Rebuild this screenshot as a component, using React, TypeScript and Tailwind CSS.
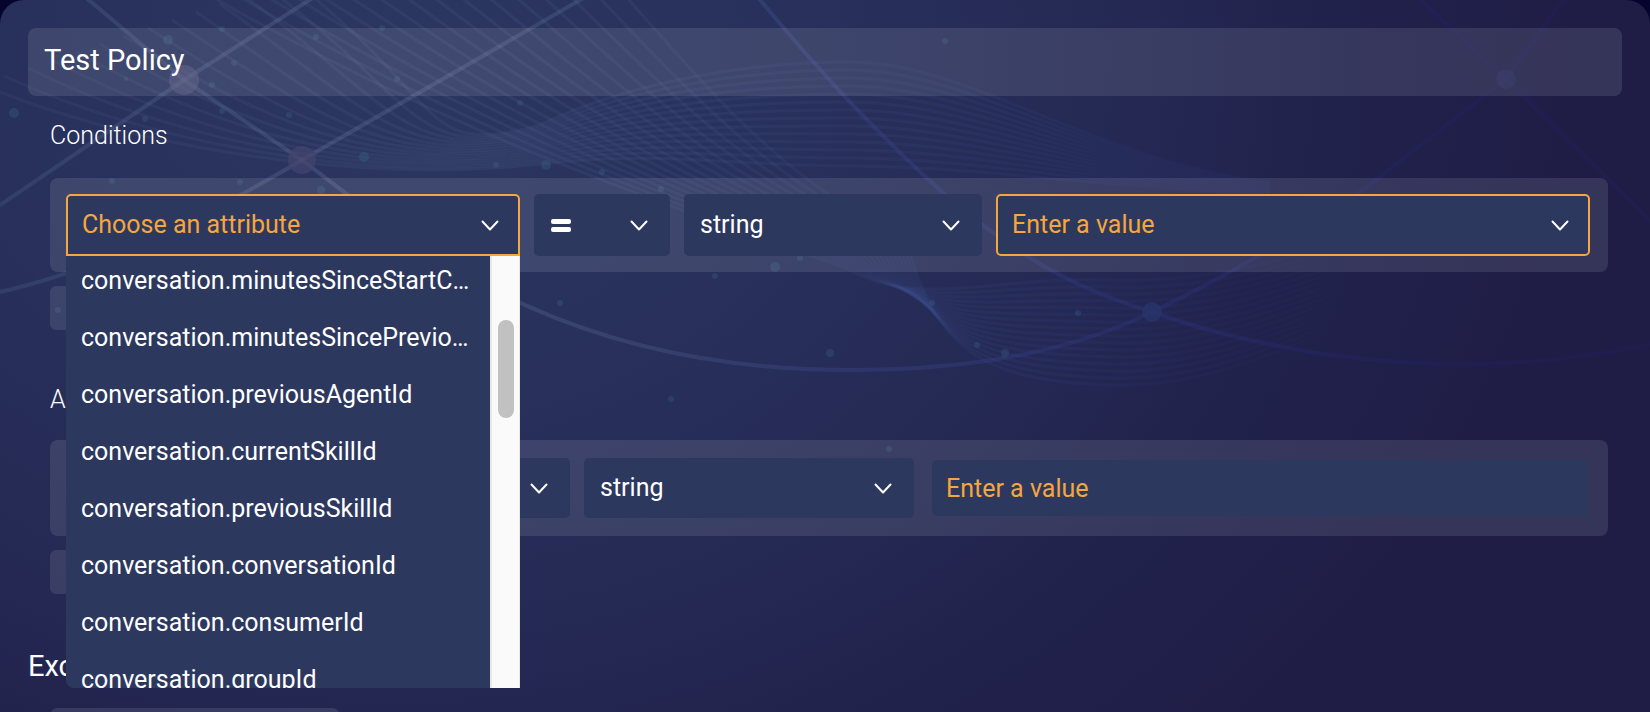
const ITEMS = [
  'conversation.minutesSinceStartConversation',
  'conversation.minutesSincePreviousAssignment',
  'conversation.previousAgentId',
  'conversation.currentSkillId',
  'conversation.previousSkillId',
  'conversation.conversationId',
  'conversation.consumerId',
  'conversation.groupId',
];

const range = (n: number) => Array.from({ length: n }, (_, i) => i);

const waves = [
  ...range(14).map((i) => {
    const crest = 62 + (13 - i) * 8;
    return `M ${-20 + i * 24} ${84 - i * 8} C ${110 + i * 26} ${140 - i * 3}, ${340 + i * 6} ${186 - i * 2}, 540 ${164 - i * 3} C ${650 - i * 2} ${150 - i * 5}, 740 ${crest}, 850 ${crest} C 970 ${crest}, 1090 ${160 + (13 - i) * 2}, 1270 ${182 + (13 - i)}`;
  }),
  ...range(16).map(
    (i) =>
      `M ${200 + i * 28} -10 C ${390 + i * 21} ${100 - i}, ${560 + i * 15} ${170 + i}, ${846 + i * 4} ${268 - i * 2} C ${920 + i} ${310 + i * 3}, ${990} ${276 + i * 7}, ${1110} ${280 + i * 7} S ${1330} ${250 + i * 5}, ${1480} ${190 + i * 5}`,
  ),
];

const threads = [
  'M 84 -4 L 184 80 L 302 160 C 420 250, 560 370, 850 370 C 1000 370, 1090 342, 1152 312 C 1240 270, 1340 210, 1386 172 L 1506 79 L 1570 -10',
  'M -10 212 L 184 80 L 322 -8',
  'M -10 294 Q 120 268 302 160 L 594 -8',
  'M 752 -10 Q 850 110 940 190 C 1020 260, 1080 290, 1152 312 C 1260 350, 1450 390, 1660 342',
  'M 1410 -10 L 1506 79 L 1660 230',
];

const dots: [number, number, number][] = [
  [14, 113, 5], [168, 40, 5], [222, 29, 3], [126, 79, 2], [145, 119, 3], [212, 85, 3],
  [222, 111, 3], [289, 115, 3], [364, 157, 5], [240, 182, 3], [112, 181, 3], [321, 190, 4],
  [316, 37, 3], [382, 28, 3], [234, 63, 3], [397, 79, 3], [496, 165, 3], [546, 165, 5],
  [520, 103, 3], [602, 172, 3], [661, 189, 3], [945, 41, 3], [775, 267, 5], [715, 276, 3],
  [800, 258, 3], [560, 303, 3], [830, 353, 4], [671, 399, 3], [932, 303, 3], [977, 345, 3],
  [1005, 353, 4], [1078, 313, 3], [889, 449, 3], [58, 310, 3],
];

function Backdrop() {
  return (
    <svg
      className="pointer-events-none absolute inset-x-0 top-0 h-[712px] w-full"
      viewBox="0 0 1650 712"
      preserveAspectRatio="none"
      fill="none"
      aria-hidden="true"
    >
      <defs>
        <linearGradient id="wave" gradientUnits="userSpaceOnUse" x1="0" y1="0" x2="1650" y2="0">
          <stop offset="0" stopColor="#8090b4" stopOpacity="0.06" />
          <stop offset="0.3" stopColor="#7088b0" stopOpacity="0.1" />
          <stop offset="0.48" stopColor="#5068a8" stopOpacity="0.1" />
          <stop offset="0.65" stopColor="#3448a0" stopOpacity="0.12" />
          <stop offset="0.84" stopColor="#2a3880" stopOpacity="0" />
        </linearGradient>
        <linearGradient id="thread" gradientUnits="userSpaceOnUse" x1="0" y1="0" x2="1650" y2="0">
          <stop offset="0" stopColor="#6088a8" stopOpacity="0.18" />
          <stop offset="0.2" stopColor="#9098b8" stopOpacity="0.2" />
          <stop offset="0.34" stopColor="#8098b0" stopOpacity="0.18" />
          <stop offset="0.5" stopColor="#4858b0" stopOpacity="0.24" />
          <stop offset="0.72" stopColor="#303c98" stopOpacity="0.24" />
          <stop offset="0.86" stopColor="#24248c" stopOpacity="0.16" />
          <stop offset="1" stopColor="#20207c" stopOpacity="0.12" />
        </linearGradient>
      </defs>
      <g stroke="url(#wave)" strokeWidth="3">
        {waves.map((d) => (
          <path key={d} d={d} />
        ))}
      </g>
      <g stroke="url(#thread)" strokeWidth="4">
        {threads.map((d) => (
          <path key={d} d={d} />
        ))}
      </g>
      {dots.map(([cx, cy, r], i) => (
        <circle key={i} cx={cx} cy={cy} r={r} fill="#3f7f98" opacity="0.22" />
      ))}
      <circle cx="184" cy="80" r="15" fill="#55557d" opacity="0.5" />
      <circle cx="302" cy="160" r="14" fill="#45456e" opacity="0.7" />
      <circle cx="1152" cy="312" r="10" fill="#28356a" opacity="0.8" />
      <circle cx="1506" cy="79" r="10" fill="#272a5c" opacity="0.5" />
    </svg>
  );
}

function Chevron({ inset }: { inset: string }) {
  return (
    <svg
      className={`pointer-events-none absolute top-1/2 h-5 w-5 -translate-y-1/2 ${inset}`}
      viewBox="0 0 20 20"
      fill="none"
      stroke="#ffffff"
      strokeWidth="2"
      strokeLinecap="round"
      strokeLinejoin="round"
      aria-hidden="true"
    >
      <path d="M2.5 6.5 L10 14.5 L17.5 6.5" />
    </svg>
  );
}

function Select({ label, value, className, orange = false }: { label: string; value?: string; className: string; orange?: boolean }) {
  return (
    <div className={`relative rounded-[5px] bg-[#2d385e] ${className}`}>
      <select
        aria-label={label}
        className={`block h-full w-full appearance-none bg-transparent pr-14 outline-none ${orange ? 'pl-[14px] text-[#f4a641]' : 'pl-4 text-white'}`}
      >
        {value && <option>{value}</option>}
      </select>
      <Chevron inset={orange ? 'right-[18px]' : 'right-[21px]'} />
    </div>
  );
}

function OperatorSelect({ className }: { className: string }) {
  return (
    <button type="button" aria-label="Operator: equals" className={`relative rounded-[5px] bg-[#2d385e] ${className}`}>
      <svg className="ml-4 h-6 w-6" viewBox="0 0 24 24" aria-hidden="true">
        <rect x="1" y="6" width="20" height="5" rx="2" fill="#ffffff" />
        <rect x="1" y="14" width="20" height="5" rx="2" fill="#ffffff" />
      </svg>
      <Chevron inset="right-[21px]" />
    </button>
  );
}

function AttributePicker() {
  return (
    <div className="relative w-[454px] shrink-0">
      <button
        type="button"
        aria-haspopup="listbox"
        aria-expanded="true"
        className="relative block h-[62px] w-full rounded-t-[5px] border-2 border-[#f4a641] bg-[#2d385e] pl-[14px] text-left text-[#f4a641]"
      >
        Choose an attribute
        <Chevron inset="right-[18px]" />
      </button>
      <div className="absolute inset-x-0 top-full z-10 flex h-[432px] overflow-hidden rounded-bl-lg bg-[#2d385e]">
        <ul role="listbox" aria-label="Attributes" className="-mt-1 min-w-0 flex-1 text-white">
          {ITEMS.map((item) => (
            <li key={item} role="option" aria-selected="false" className="h-[57px] truncate pl-[15px] pr-4 leading-[57px]">
              {item}
            </li>
          ))}
        </ul>
        <div className="w-[30px] border-l-2 border-r border-[#e8e8e8] bg-[#fafafa] pl-[6px] pt-16">
          <div className="h-[98px] w-4 rounded-full bg-[#c1c1c1]" />
        </div>
      </div>
    </div>
  );
}

export default function App() {
  return (
    <div className="h-screen overflow-hidden bg-[#04042e] font-[Roboto,sans-serif] text-[25px] leading-8 text-white">
      <main className="relative min-h-full rounded-t-3xl bg-[radial-gradient(ellipse_72%_125%_at_24%_8%,#2b3661_0%,#28315c_32%,#252a54_58%,#21224c_78%,#1f1d46_100%)] px-7 pt-7">
        <Backdrop />
        <div className="relative">
          <input
            aria-label="Policy name"
            defaultValue="Test Policy"
            className="block h-[68px] w-full rounded-lg bg-white/10 px-4 pb-1 text-[29px] text-white outline-none"
          />

          <section className="ml-[22px] mr-[14px]">
            <h2 className="pt-6 font-light">Conditions</h2>
            <div className="mt-[26px] flex gap-[14px] rounded-lg bg-white/10 py-4 pl-4 pr-[18px]">
              <AttributePicker />
              <OperatorSelect className="h-[62px] w-[136px] shrink-0" />
              <Select label="Value type" value="string" className="h-[62px] w-[298px] shrink-0" />
              <Select label="Value" value="Enter a value" orange className="h-[62px] min-w-0 flex-1 border-2 border-[#f4a641]" />
            </div>
            <button type="button" aria-label="Add condition" className="mt-[14px] block h-11 w-40 rounded-md bg-white/10" />
          </section>

          <section className="ml-[22px] mr-[14px]">
            <h2 className="pt-[54px] font-light">Actions</h2>
            <div className="mt-6 flex items-center gap-[14px] rounded-lg bg-white/10 py-[18px] pl-4 pr-5">
              <Select label="Action attribute" className="h-[60px] w-[354px] shrink-0" />
              <OperatorSelect className="h-[60px] w-[136px] shrink-0" />
              <Select label="Action value type" value="string" className="h-[60px] w-[330px] shrink-0" />
              <input
                aria-label="Action value"
                placeholder="Enter a value"
                className="ml-1 h-14 min-w-0 flex-1 rounded-[5px] bg-[#2d385e] px-[14px] outline-none placeholder:text-[#f4a641] placeholder:opacity-100"
              />
            </div>
            <button type="button" aria-label="Add action" className="mt-[14px] block h-11 w-40 rounded-md bg-white/10" />
          </section>

          <h2 className="mt-14 text-[29px]">Exceptions</h2>
          <div className="ml-[22px] mt-[26px] h-16 w-[290px] rounded-lg bg-white/10" />
        </div>
      </main>
    </div>
  );
}
